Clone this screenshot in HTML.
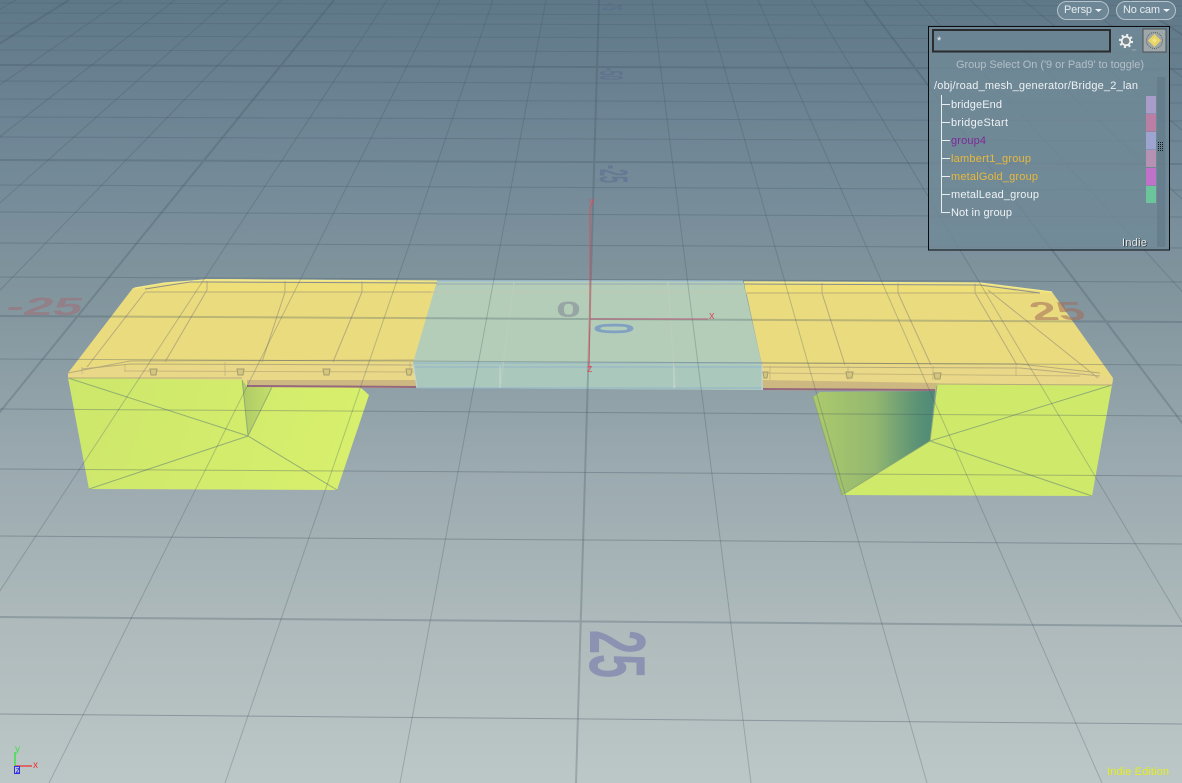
<!DOCTYPE html>
<html><head><meta charset="utf-8"><style>
html,body{margin:0;padding:0;background:#7f939e}
body{width:1182px;height:783px;overflow:hidden}
svg{display:block}
text{font-family:"Liberation Sans",sans-serif}
</style></head><body>
<svg width="1182" height="783" viewBox="0 0 1182 783" xmlns="http://www.w3.org/2000/svg">
<defs>
<linearGradient id="bg" x1="0" y1="0" x2="0" y2="1">
<stop offset="0" stop-color="#5f7888"/><stop offset=".2" stop-color="#718897"/><stop offset=".4" stop-color="#84979f"/><stop offset=".6" stop-color="#9baab0"/><stop offset=".8" stop-color="#aebaBB"/><stop offset="1" stop-color="#bcc7c7"/>
</linearGradient>
<linearGradient id="dark" x1="813" y1="0" x2="935" y2="0" gradientUnits="userSpaceOnUse">
<stop offset="0" stop-color="#adca6c"/><stop offset=".5" stop-color="#93b870"/><stop offset=".85" stop-color="#5c9276"/><stop offset="1" stop-color="#4f8a78"/>
</linearGradient>
<linearGradient id="lite" x1="245" y1="0" x2="290" y2="0" gradientUnits="userSpaceOnUse">
<stop offset="0" stop-color="#b0cc68"/><stop offset="1" stop-color="#d2ec6a"/>
</linearGradient>
<linearGradient id="blockL" x1="68" y1="378" x2="369" y2="490" gradientUnits="userSpaceOnUse">
<stop offset="0" stop-color="#cde76c"/><stop offset="1" stop-color="#d8f06c"/>
</linearGradient>
<linearGradient id="gt" x1="0" y1="0" x2="0" y2="783" gradientUnits="userSpaceOnUse">
<stop offset="0" stop-color="#3f5566" stop-opacity=".14"/><stop offset=".3" stop-color="#3f5262" stop-opacity=".24"/><stop offset="1" stop-color="#44525e" stop-opacity=".42"/>
</linearGradient>
<linearGradient id="gT" x1="0" y1="0" x2="0" y2="783" gradientUnits="userSpaceOnUse">
<stop offset="0" stop-color="#3f5566" stop-opacity=".12"/><stop offset=".3" stop-color="#3f5262" stop-opacity=".2"/><stop offset="1" stop-color="#44525e" stop-opacity=".3"/>
</linearGradient>
</defs>
<rect width="1182" height="783" fill="url(#bg)"/>

<g font-weight="bold" fill="#56618a" fill-opacity=".42">
<text font-size="27" transform="translate(603,3) rotate(90) scale(.18,1)">-75</text>
<text font-size="32" transform="translate(600,68) rotate(90) scale(.26,1)">-50</text>
<text font-size="40" transform="translate(600,165) rotate(90) scale(.31,1)">-25</text>
<text font-size="25" fill="#a2686f" fill-opacity=".5" transform="translate(4,315) skewX(-20) scale(2.1,1)">-25</text>
</g>

<polygon points="68,378 242,378 247,386 360,387 369,395 337,490 89,489" fill="url(#blockL)"/>
<polygon points="242,380 248,436 272,387 247,386" fill="url(#lite)"/>
<polygon points="937,384 1112,385 1092,496 842,495 930,441" fill="#cfe96b"/>
<polygon points="813,397 820,392 935,391 930,441 842,495" fill="url(#dark)"/>
<g stroke="#8aa472" stroke-opacity=".85" stroke-width="1" fill="none">
<path d="M68,378L248,436L337,490M89,489L248,436M242,378L248,436L272,387"/>
<path d="M1112,385L930,441L1092,496M937,385L930,441L842,495M813,397L842,495"/>
</g>

<polygon points="133,288 207,279 437,281 414,364 416,388 247,387 242,378 68,378 68,373" fill="#eadb7f"/>
<polygon points="133,288 165,283 207,279 437,281 436,292 145,292" fill="#eedf78"/>
<polygon points="68,373 87,367 414,362 414,382 250,380 68,378" fill="#e8d888"/>
<polygon points="247,380 416,380 416,388 247,387" fill="#cdb882"/>
<polygon points="247,385 416,386 416,388 247,387" fill="#96687e"/>
<polygon points="744,282 980,283 1052,292 1113,378 1112,385 937,384 935,391 760,390 762,365" fill="#eadb7f"/>
<polygon points="744,282 980,283 1052,292 1045,294 746,294" fill="#eedf78"/>
<polygon points="762,365 1017,365 1100,374 1113,380 1112,385 937,384 762,380" fill="#e8d888"/>
<polygon points="762,380 937,383 935,391 760,390" fill="#cdb882"/>
<polygon points="760,388 935,389 935,391 760,390" fill="#96687e"/>
<polygon points="437,281 743,281 762,365 763,390 417,388 413,363" fill="#b4cdb8"/>
<polygon points="413,363 762,365 763,390 417,388" fill="#aac8bc"/>

<g stroke="#b3a67a" stroke-width="1" fill="none" stroke-opacity=".9">
<path d="M145,292H437M746,293H1040"/>
<path d="M207,281L207,290L165,362M285,281V292L262,362M362,281V292L333,362M145,292L87,367"/>
<path d="M822,283V293L845,365M898,283V293L931,365M975,283L975,293L1017,365M988,290L1098,378"/>
<path d="M68,373L130,361L414,360M762,363L1020,364L1100,373"/>
<path d="M82,369L130,364L414,365M762,367L1020,368L1100,376"/>
<path d="M68,378L242,378M937,384L1112,385"/>
<path d="M125,371L414,372M762,373L1080,376" stroke="#c4b478"/>
<path d="M82,367v7M125,364v8M225,362v14M410,362v14M770,366v14M848,366v14M933,366v14M1016,366v10" stroke-opacity=".6"/>
</g>
<g stroke="#a39c70" stroke-width="1" fill="#d6c67c">
<path d="M150,369h7l-1,6h-5zM237,369h7l-1,6h-5zM323,369h7l-1,6h-5zM406,369h6l-1,6h-4zM846,372h7l-1,6h-5zM763,372h5l-1,6h-3zM934,373h7l-1,6h-5z"/>
</g>
<path d="M135,288L165,283L207,280L437,281M744,282L980,283L1052,292" stroke="#f3eb90" stroke-width="1.300" fill="none"/>
<path d="M145,289L190,282L207,282L437,283M744,284L980,285L1040,293" stroke="#8c8f90" stroke-width="1" fill="none"/>
<g fill="none">
<path d="M437,281H743" stroke="#a2c2d0" stroke-width="1.500"/>
<path d="M437,284H743" stroke="#8aa0b0" stroke-width=".8"/>
<path d="M413,363H762M417,388H763M415,367H762" stroke="#92b4cc" stroke-width="1"/>
<path d="M514,282L500,388M668,282L675,388" stroke="#bdcdc0" stroke-width="1"/>
<path d="M431,292H740" stroke="#c4c6b0" stroke-width=".8"/>
<path d="M500,366v22M674,366v22M413,363l4,25M762,365v25" stroke="#c8d6d6" stroke-width="1"/>
</g>

<g font-weight="bold">
<text font-size="26" fill="#a06a58" fill-opacity=".55" transform="translate(1034,320) skewX(22) scale(1.85,1)">25</text>
<text font-size="22" fill="#848c96" fill-opacity=".6" transform="translate(556,317) scale(2.05,1)">0</text>
<text font-size="55" fill="#7899c4" fill-opacity=".85" transform="translate(595,323) rotate(90) scale(.36,1)">0</text>
<text font-size="80" fill="#8b92b2" transform="translate(590,630) rotate(90) scale(.54,1)">25</text>
</g>

<g stroke="url(#gT)" fill="none" stroke-width="1">
<path d="M0,3L1182,6M0,13L1182,16M0,23L1182,26M0,36L1182,39M0,50L1182,53M0,81L1182,85M0,99L1182,103M0,117L1182,121M0,137L1182,141M0,185L1182,190M0,212L1182,217M0,243L1182,248M0,277L1182,282M0,359L1182,365M0,409L1182,416M0,469L1182,476M0,536L1182,544M0,714L1182,724"/>
</g>
<g stroke="#3f5262" stroke-opacity=".28" fill="none" stroke-width="1">
<path d="M0,3L1182,6M0,13L1182,16M0,23L1182,26M0,36L1182,39M0,50L1182,53M0,81L1182,85M0,99L1182,103M0,117L1182,121M0,137L1182,141M0,185L1182,190M0,212L1182,217M0,243L1182,248M0,277L1182,282M0,359L1182,365M0,409L1182,416M0,469L1182,476M0,536L1182,544M0,714L1182,724" stroke-opacity=".12"/>
<path d="M16,0L-1354,783M122,0L-1003,783M175,0L-828,783M228,0L-652,783M281,0L-477,783M387,0L-126,783M440,0L49,783M493,0L225,783M546,0L400,783M652,0L751,783M705,0L927,783M758,0L1102,783M811,0L1278,783M917,0L1629,783M970,0L1804,783M1023,0L1980,783M1076,0L2155,783M1182,0L2506,783"/>
<g stroke-width="2">
<path d="M0,65L1182,69M0,160L1182,164M0,316L1182,322M0,617L1182,626M599,0L576,783M334,0L-301,783M864,0L1453,783M69,0L-1179,783M1129,0L2331,783"/>
</g>
</g>

<path d="M590,207V319L589,368" stroke="#d8505c" stroke-width="1" fill="none"/>
<path d="M590,319H708" stroke="#b85c78" stroke-width="1" fill="none"/>
<g fill="#d8505c" font-size="11">
<text x="589" y="205">y</text>
<text x="709" y="319">x</text>
<text x="587" y="372">z</text>
</g>

<rect x="1057.500" y="1.500" width="51" height="18" rx="9" fill="#6e8796" stroke="#b6c3cb" stroke-width="1"/>
<text x="1064" y="13" font-size="11" fill="#e6ecf0" textLength="28" lengthAdjust="spacing">Persp</text>
<polygon points="1095,9 1102,9 1098.500,12" fill="#f0f4f6"/>
<rect x="1116.500" y="1.500" width="59" height="18" rx="9" fill="#6e8796" stroke="#b6c3cb" stroke-width="1"/>
<text x="1123" y="13" font-size="11" fill="#e6ecf0" textLength="37" lengthAdjust="spacing">No cam</text>
<polygon points="1163,9 1170,9 1166.500,12" fill="#f0f4f6"/>

<rect x="928.500" y="26.500" width="241" height="223.500" fill="#708997" fill-opacity=".8" stroke="#0a0c10" stroke-width="1"/>
<rect x="933" y="30" width="177" height="21.500" fill="#6b8493" stroke="#2a2c2e" stroke-width="2"/>
<text x="937" y="44" font-size="11" fill="#f0f0f0">*</text>
<g transform="translate(1126,41)">
<circle r="5.800" fill="none" stroke="#eef0ee" stroke-width="2.600" stroke-dasharray="2 2.550"/>
<circle r="4.300" fill="none" stroke="#eef0ee" stroke-width="1.800"/>
<circle r="2.800" fill="#7a868c"/>
</g>
<polygon points="1131,49 1137,49 1134,51.500" fill="#8c9aa2"/>
<rect x="1143" y="29" width="23" height="23" fill="#9ea7aa" stroke="#4a5054" stroke-width="1"/>
<circle cx="1154.500" cy="40.500" r="8" fill="none" stroke="#5c6058" stroke-width="1" stroke-dasharray="1 1"/>
<polygon points="1154.500,34 1161,40.500 1154.500,47 1148,40.500" fill="#e8d468"/>
<path d="M1154.500,38L1157,40.500L1154.500,43L1152,40.500Z" fill="#f4e480"/>

<text x="956" y="68" font-size="11" fill="#b3bfc6" textLength="188" lengthAdjust="spacing">Group Select On ('9 or Pad9' to toggle)</text>
<text x="934" y="89" font-size="11" fill="#eef2f4" textLength="204" lengthAdjust="spacing">/obj/road_mesh_generator/Bridge_2_lan</text>

<path d="M941.500,95V212.500H950M941.500,104.500H950M941.500,122.500H950M941.500,140.500H950M941.500,158.500H950M941.500,176.500H950M941.500,194.500H950" stroke="#e8eef0" stroke-width="1" fill="none"/>
<g font-size="11" fill="#eef2f4">
<text x="951" y="108" textLength="51" lengthAdjust="spacing">bridgeEnd</text>
<text x="951" y="126" textLength="57" lengthAdjust="spacing">bridgeStart</text>
<text x="951" y="144" textLength="35" lengthAdjust="spacing" fill="#7c2a9a">group4</text>
<text x="951" y="162" textLength="80" lengthAdjust="spacing" fill="#e8b83c">lambert1_group</text>
<text x="951" y="180" textLength="87" lengthAdjust="spacing" fill="#e8b83c">metalGold_group</text>
<text x="951" y="198" textLength="88" lengthAdjust="spacing">metalLead_group</text>
<text x="951" y="216" textLength="61" lengthAdjust="spacing">Not in group</text>
</g>

<rect x="1157" y="77" width="8.500" height="170" fill="#62798a" fill-opacity=".7"/>
<rect x="1146" y="96" width="10" height="17.500" fill="#a89cc8"/>
<rect x="1146" y="114" width="10" height="17.500" fill="#bb7fa6"/>
<rect x="1146" y="132" width="10" height="17.500" fill="#9da4cf"/>
<rect x="1146" y="150" width="10" height="17" fill="#b592b4"/>
<rect x="1146" y="168" width="10" height="17.500" fill="#bf72c8"/>
<rect x="1146" y="186" width="10" height="17" fill="#6cc49a"/>
<path d="M1158.500,142v10M1160.500,142v10M1162.500,142v10" stroke="#15181a" stroke-width="1" stroke-dasharray="1 1" fill="none"/>

<text x="1122" y="246" font-size="11" fill="#1a2024" textLength="25" lengthAdjust="spacing" transform="translate(.7,.7)">Indie</text>
<text x="1122" y="246" font-size="11" fill="#e8ecee" textLength="25" lengthAdjust="spacing">Indie</text>

<path d="M15,752V766" stroke="#3fe04a" stroke-width="1.500"/>
<path d="M15,766H32" stroke="#ee3030" stroke-width="1.300"/>
<rect x="14.500" y="766.500" width="5" height="7" fill="none" stroke="#3030e8" stroke-width="1"/>
<text x="15" y="752" font-size="10" fill="#3fe04a">y</text>
<text x="33" y="768" font-size="10" fill="#ee3030">x</text>
<text x="15.500" y="773" font-size="9" fill="#3030e8">z</text>

<text x="1107" y="775" font-size="11" fill="#e4ee1e" textLength="62" lengthAdjust="spacing">Indie Edition</text>
</svg>
</body></html>
